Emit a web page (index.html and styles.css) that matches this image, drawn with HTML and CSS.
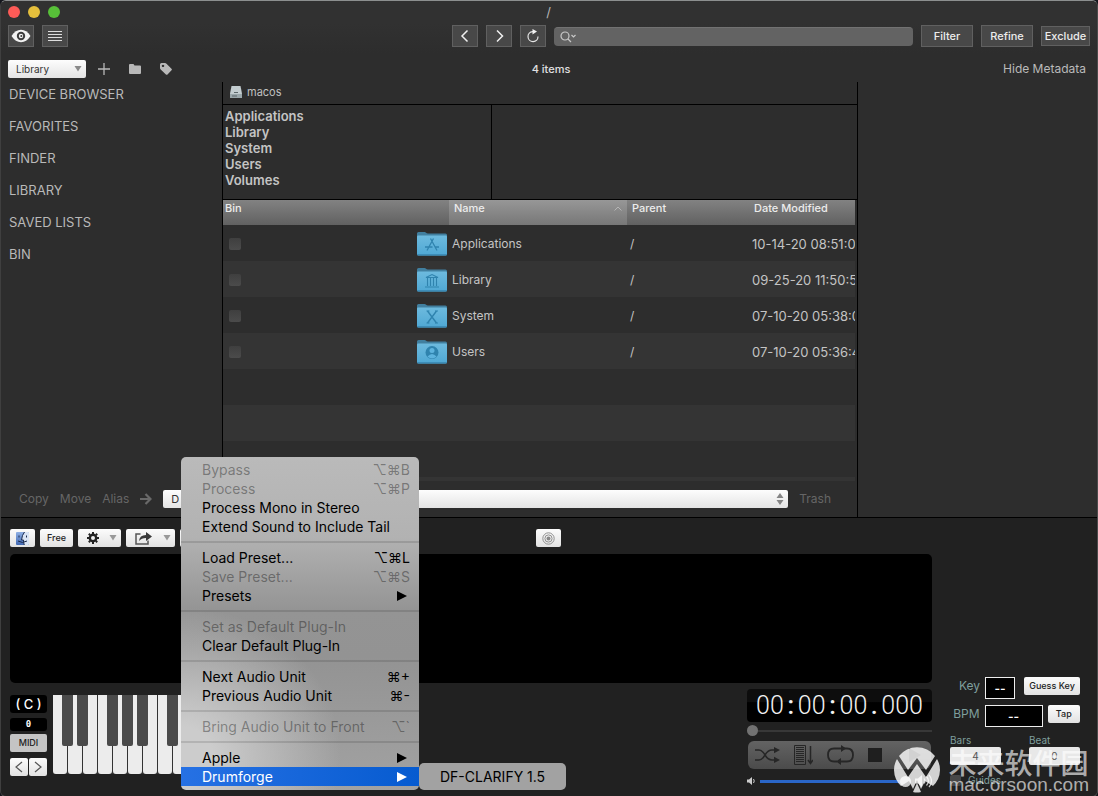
FILE: index.html
```
<!DOCTYPE html>
<html lang="en">
<head>
<meta charset="utf-8">
<title>/</title>
<link rel="stylesheet" href="styles.css">
</head>
<body>
<svg class="defs" aria-hidden="true">
  <defs>
    <linearGradient id="folderFill" x1="0" y1="0" x2="0" y2="1"><stop offset="0" stop-color="#6dbade"/><stop offset="1" stop-color="#4fa8d4"/></linearGradient>
    <linearGradient id="finderFill" x1="0" y1="0" x2="0" y2="1"><stop offset="0" stop-color="#8fb0e4"/><stop offset="1" stop-color="#4169b4"/></linearGradient>
    <pattern id="octave" width="105" height="80" patternUnits="userSpaceOnUse">
      <rect width="105" height="80" fill="#333"/>
      <path fill="#ececec" d="M0 0h14v76q0 3-3 3h-8q-3 0-3-3zM15 0h14v76q0 3-3 3h-8q-3 0-3-3zM30 0h14v76q0 3-3 3h-8q-3 0-3-3zM45 0h14v76q0 3-3 3h-8q-3 0-3-3zM60 0h14v76q0 3-3 3h-8q-3 0-3-3zM75 0h14v76q0 3-3 3h-8q-3 0-3-3zM90 0h14v76q0 3-3 3h-8q-3 0-3-3z"/>
      <path fill="#4a4a4a" d="M9 0h11v49q0 2-2 2h-7q-2 0-2-2zM24 0h11v49q0 2-2 2h-7q-2 0-2-2zM54 0h11v49q0 2-2 2h-7q-2 0-2-2zM69 0h11v49q0 2-2 2h-7q-2 0-2-2zM84 0h11v49q0 2-2 2h-7q-2 0-2-2z"/>
    </pattern>
    <symbol id="folder" viewBox="0 0 30 24">
      <path fill="#417f9f" d="M0 1.500q0-1.500 1.500-1.500h6q1 0 1.600.8t1.700.8h17.700q1.500 0 1.500 1.500V12H0z"/>
      <path fill="url(#folderFill)" d="M0 4.500q0-1 1-1h28q1 0 1 1V22q0 1.500-1.500 1.500h-27Q0 23.500 0 22z"/>
      <path fill="#3d8db8" d="M0 22h30q0 1.500-1.500 1.500h-27Q0 23.500 0 22z"/>
    </symbol>
  </defs>
</svg>

<div class="window">
  <header class="titlebar">
    <div class="lights">
      <button class="light red" aria-label="Close"></button>
      <button class="light yellow" aria-label="Minimize"></button>
      <button class="light green" aria-label="Zoom"></button>
    </div>
    <h1 class="title">/</h1>
  </header>

  <div class="toolbar">
    <div class="toolbar-left">
      <button class="tool" aria-label="Preview">
        <svg width="20" height="14" viewBox="0 0 20 14"><path fill="#f2f2f2" d="M0.500 7Q4.500.8 10 .8T19.500 7Q15.500 13.200 10 13.200T.5 7z"/><circle cx="10" cy="7" r="4.200" fill="#3c3c3c"/><circle cx="10" cy="7" r="2.200" fill="#f2f2f2"/><circle cx="10.300" cy="7" r="1" fill="#3c3c3c"/></svg>
      </button>
      <button class="tool" aria-label="List view">
        <svg width="16" height="12" viewBox="0 0 16 12"><path stroke="#ddd" d="M1 1.500h14M1 4.500h14M1 7.500h14M1 10.500h14"/></svg>
      </button>
    </div>
    <button class="tool" aria-label="Back"><svg width="12" height="14" viewBox="0 0 12 14"><path fill="none" stroke="#f0f0f0" stroke-width="1.500" d="M8.500 1.500L3 7l5.500 5.500"/></svg></button>
    <button class="tool" aria-label="Forward"><svg width="12" height="14" viewBox="0 0 12 14"><path fill="none" stroke="#f0f0f0" stroke-width="1.500" d="M4 1.500L9.500 7 4 12.500"/></svg></button>
    <button class="tool" aria-label="Reload"><svg width="14" height="14" viewBox="0 0 14 14"><path fill="none" stroke="#e6e6e6" stroke-width="1.200" d="M8 2.600H6.500A5 5 0 1 0 12 7.500"/><path fill="#f4f4f4" d="M6.500 0l4.500 2.600-4.500 2.800z"/></svg></button>
    <label class="search">
      <svg width="17" height="12" viewBox="0 0 17 12"><circle cx="5" cy="5" r="4" fill="none" stroke="#c8c8c8" stroke-width="1.200"/><path fill="none" stroke="#c8c8c8" stroke-width="1.200" d="M8 8l3 3M11.500 4l2 2 2-2"/></svg>
      <input type="search" aria-label="Search">
    </label>
    <button class="tool wide">Filter</button>
    <button class="tool wide">Refine</button>
    <button class="tool exclude">Exclude</button>
  </div>

  <div class="subbar">
    <div class="subbar-left">
      <label class="popup library">
        <select aria-label="Source"><option>Library</option></select>
        <svg width="8" height="6" viewBox="0 0 8 6"><path fill="#8a8a8a" d="M0.500 0h7L4 5.500z"/></svg>
      </label>
      <button class="bare" aria-label="Add"><svg width="12" height="12" viewBox="0 0 12 12"><path stroke="#b8b8b8" stroke-width="1.300" d="M6 0v12M0 6h12"/></svg></button>
      <button class="bare" aria-label="New folder"><svg width="12" height="10" viewBox="0 0 12 10"><path fill="#b8b8b8" d="M0 1q0-1 1-1h3.500l1 1.500H11q1 0 1 1V9q0 1-1 1H1q-1 0-1-1z"/></svg></button>
      <button class="bare" aria-label="Tag"><svg width="12" height="12" viewBox="0 0 12 12"><path fill="#b8b8b8" fill-rule="evenodd" d="M0 1.500Q0 0 1.500 0H5q.8 0 1.500.7l5 5q.8.8 0 1.600L7.500 11.500q-.8.700-1.600 0l-5.200-5Q0 5.800 0 5zM3 1.700a1.200 1.200 0 1 0 .01 0z"/></svg></button>
    </div>
    <p class="count">4 items</p>
    <button class="bare metadata">Hide Metadata</button>
  </div>

  <main class="browser">
    <nav class="sidebar">
      <a href="#device">DEVICE BROWSER</a>
      <a href="#favorites">FAVORITES</a>
      <a href="#finder">FINDER</a>
      <a href="#library">LIBRARY</a>
      <a href="#saved">SAVED LISTS</a>
      <a href="#bin">BIN</a>
    </nav>

    <section class="files">
      <div class="path">
        <svg width="12" height="12" viewBox="0 0 12 12"><path fill="#c3cdd0" d="M1.500 0h9L12 7.500V11q0 1-1 1H1q-1 0-1-1V7.500z"/><path fill="#9aa7ab" d="M0 8h12v3q0 1-1 1H1q-1 0-1-1z"/><path stroke="#5c676a" d="M2 10h5M4 6.500h4"/></svg>
        <span>macos</span>
      </div>
      <div class="columns">
        <ul>
          <li>Applications</li>
          <li>Library</li>
          <li>System</li>
          <li>Users</li>
          <li>Volumes</li>
        </ul>
      </div>
      <div class="list">
        <table>
          <colgroup><col class="c-bin"><col class="c-name"><col class="c-parent"><col></colgroup>
          <thead>
            <tr><th>Bin</th><th class="sorted"><div>Name<svg width="8" height="5" viewBox="0 0 8 5"><path fill="none" stroke="#b5b5b5" d="M0.500 4.500L4 1l3.500 3.500"/></svg></div></th><th>Parent</th><th class="date">Date Modified</th></tr>
          </thead>
          <tbody>
            <tr>
              <td><div class="bin"><input type="checkbox" aria-label="Applications in bin">
                <svg width="30" height="24" viewBox="0 0 30 24"><use href="#folder"/><path fill="none" stroke="#2f83ae" stroke-width="1.300" d="M16.500 6.500L10 18.500M13.500 6.500L20 18.500M8 15h7.500M18 15h4"/></svg></div></td>
              <td>Applications</td><td>/</td><td class="date">10-14-20 08:51:0</td>
            </tr>
            <tr>
              <td><div class="bin"><input type="checkbox" aria-label="Library in bin">
                <svg width="30" height="24" viewBox="0 0 30 24"><use href="#folder"/><path fill="none" stroke="#2f83ae" stroke-width="1.100" d="M9 9.500L15 6.500l6 3zM10.500 10v8M13.500 10v8M16.500 10v8M19.500 10v8M8 19h14"/></svg></div></td>
              <td>Library</td><td>/</td><td class="date">09-25-20 11:50:5</td>
            </tr>
            <tr>
              <td><div class="bin"><input type="checkbox" aria-label="System in bin">
                <svg width="30" height="24" viewBox="0 0 30 24"><use href="#folder"/><path fill="none" stroke="#2f83ae" stroke-width="1.400" d="M10.500 7l9 12M19.500 7l-9 12"/><path stroke="#2f83ae" d="M9.500 7h3M18 7h3M9.500 19h3M18 19h3"/></svg></div></td>
              <td>System</td><td>/</td><td class="date">07-10-20 05:38:0</td>
            </tr>
            <tr>
              <td><div class="bin"><input type="checkbox" aria-label="Users in bin">
                <svg width="30" height="24" viewBox="0 0 30 24"><use href="#folder"/><circle cx="15" cy="12.500" r="6.500" fill="#2f83ae"/><circle cx="15" cy="10.500" r="2.500" fill="#5db3de"/><path fill="#5db3de" d="M10.500 16.500q4.500-5 9 0-4.500 4-9 0z"/></svg></div></td>
              <td>Users</td><td>/</td><td class="date">07-10-20 05:36:4</td>
            </tr>
            <tr><td colspan="4"></td></tr>
            <tr><td colspan="4"></td></tr>
            <tr><td colspan="4"></td></tr>
            <tr><td colspan="4"></td></tr>
          </tbody>
        </table>
      </div>
    </section>

    <div class="actions">
      <button class="bare" disabled>Copy</button>
      <button class="bare" disabled>Move</button>
      <button class="bare" disabled>Alias</button>
      <svg class="arrow" width="12" height="12" viewBox="0 0 12 12"><path fill="none" stroke="#696969" stroke-width="2.200" d="M0 6h10M5.500 1l5 5-5 5"/></svg>
      <label class="popup destination">
        <select aria-label="Destination"><option>D</option></select>
        <svg width="8" height="12" viewBox="0 0 8 12"><path fill="#858585" d="M0.500 5L4 0l3.500 5zM.5 7h7L4 12z"/></svg>
      </label>
      <button class="bare" disabled>Trash</button>
    </div>
    <aside class="inspector"></aside>
  </main>

  <footer class="player">
    <div class="player-bar">
      <div class="player-tools">
        <button class="light-btn finder-btn" aria-label="Reveal in Finder"><svg width="13" height="13" viewBox="0 0 13 13"><rect width="13" height="13" rx="1" fill="url(#finderFill)"/><path fill="#d9e4f5" d="M8.500 0H12q1 0 1 1v11q0 1-1 1H8.200Q7.300 11 7.300 8H5.500Q6 3 8.500 0z"/><path fill="none" stroke="#1b2b4d" d="M8.500 0Q6 3 5.500 8h2q0 3 .8 5M3 3.500v2M10.500 3.500v2M2 9q4.500 3 9 0"/></svg></button>
        <button class="light-btn free">Free</button>
        <button class="light-btn gear" aria-label="Settings">
          <svg width="12" height="12" viewBox="0 0 12 12"><circle cx="6" cy="6" r="3.200" fill="none" stroke="#222" stroke-width="2.400"/><path stroke="#222" stroke-width="2" d="M6 0v2M6 10v2M0 6h2M10 6h2M1.800 1.800l1.400 1.400M8.800 8.800l1.400 1.400M1.800 10.200l1.400-1.400M8.800 3.200l1.400-1.400"/></svg>
          <svg width="8" height="6" viewBox="0 0 8 6"><path fill="#999" d="M0.500 0h7L4 5.500z"/></svg>
        </button>
        <button class="light-btn share" aria-label="Share">
          <svg width="17" height="13" viewBox="0 0 17 13"><path fill="none" stroke="#555" stroke-width="1.500" d="M5.500 2H1v10h12V8.500"/><path fill="#3a3a3a" d="M4 9Q4.500 3 11 3V0l6 4.500L11 9V6Q6.500 6 4 9z"/></svg>
          <svg width="8" height="6" viewBox="0 0 8 6"><path fill="#999" d="M0.500 0h7L4 5.500z"/></svg>
        </button>
        <button class="light-btn gear" aria-label="Audio unit"></button>
      </div>
      <button class="light-btn target" aria-label="Effects"><svg width="13" height="13" viewBox="0 0 13 13"><g fill="none" stroke="#909090"><circle cx="6.500" cy="6.500" r="5.700"/><circle cx="6.500" cy="6.500" r="3.600"/></g><circle cx="6.500" cy="6.500" r="2" fill="#888"/></svg></button>
    </div>

    <div class="deck">
      <div class="deck-main">
        <div class="wave"></div>
        <div class="lower">
          <div class="keys">
            <div class="pitch">
              <output class="note">( C )</output>
              <output class="octave">0</output>
              <button class="light-btn midi">MIDI</button>
              <div class="steps">
                <button class="light-btn" aria-label="Octave down"><svg width="8" height="12" viewBox="0 0 8 12"><path fill="none" stroke="#555" stroke-width="1.200" d="M7 1L1 6l6 5"/></svg></button>
                <button class="light-btn" aria-label="Octave up"><svg width="8" height="12" viewBox="0 0 8 12"><path fill="none" stroke="#555" stroke-width="1.200" d="M1 1l6 5-6 5"/></svg></button>
              </div>
            </div>
            <svg class="piano" width="314" height="79"><rect width="314" height="79" fill="url(#octave)"/></svg>
          </div>
          <div class="transport">
            <div class="clock">00<span>:</span>00<span>:</span>00<span>.</span>000</div>
            <input class="seek" type="range" min="0" max="100" value="0" aria-label="Position">
            <div class="controls">
              <button aria-label="Shuffle"><svg width="25" height="16" viewBox="0 0 25 16"><path fill="none" stroke="#262626" stroke-width="1.500" d="M0 3h4q3 0 6 5t7 5h3M0 13h4q3 0 6-5t7-5h3"/><path fill="#262626" d="M19 0l6 3-6 3.200zM19 9.800l6 3.200-6 3z"/></svg></button>
              <button aria-label="Play list"><svg width="19" height="20" viewBox="0 0 19 20"><path fill="none" stroke="#262626" d="M0.500.5h11v19H.5zM2 4.500h8M2 6.500h8M2 8.500h8M2 10.500h8M2 12.500h8M2 14.500h8M2 16.500h8M2 2.500h8"/><path fill="none" stroke="#262626" stroke-width="1.500" d="M16.500 1v17M14 15l2.500 3.500L19 15"/></svg></button>
              <button aria-label="Loop"><svg width="27" height="20" viewBox="0 0 27 20"><path fill="none" stroke="#262626" stroke-width="1.800" d="M10 16.500H7Q1 16.500 1 10t6-6.500h9M17 3.500h3q6 0 6 6.500t-6 6.500h-7"/><path fill="#262626" d="M14 0l5 3.500L14 7zM14 13l-5 3.500 5 3.500z"/></svg></button>
              <button aria-label="Stop"><svg width="14" height="14" viewBox="0 0 14 14"><path fill="#1f1f1f" d="M0 0h14v14H0z"/></svg></button>
              <button class="play" aria-label="Play"><svg width="14" height="14" viewBox="0 0 14 14"><path fill="#1f1f1f" d="M1 0l12 7-12 7z"/></svg></button>
            </div>
            <div class="volume">
              <svg width="9" height="8" viewBox="0 0 9 8"><path fill="#ccc" d="M0 2.500h2L5 0v8L2 5.500H0z"/><path fill="none" stroke="#ccc" d="M6.500 2q1.500 2 0 4"/></svg>
              <input type="range" min="0" max="100" value="100" aria-label="Volume">
              <svg width="17" height="14" viewBox="0 0 17 14"><path fill="#ccc" d="M0 4.500h3L7 1v12L3 9.500H0z"/><path fill="none" stroke="#ccc" stroke-width="1.200" d="M9 4.500q2 2.500 0 5M11.500 2.500q4 4.500 0 9M14 .8q5 6 0 12.400"/></svg>
            </div>
          </div>
        </div>
      </div>

      <div class="tempo">
        <div class="tempo-row"><label for="key">Key</label><input id="key" class="key" type="text" value="--"><button class="light-btn guess">Guess Key</button></div>
        <div class="tempo-row"><label for="bpm">BPM</label><input id="bpm" class="bpm" type="text" value="--"><button class="light-btn tap">Tap</button></div>
        <div class="beats">
          <label>Bars<input type="text" value="4"></label>
          <label>Beat<input type="text" value="0"></label>
        </div>
        <label class="guides"><input type="checkbox">Guides</label>
      </div>
    </div>
  </footer>

  <div class="menu" role="menu">
    <button disabled>Bypass<kbd>⌥⌘B</kbd></button>
    <button disabled>Process<kbd>⌥⌘P</kbd></button>
    <button>Process Mono in Stereo</button>
    <button>Extend Sound to Include Tail</button>
    <hr>
    <button>Load Preset...<kbd>⌥⌘L</kbd></button>
    <button disabled>Save Preset...<kbd>⌥⌘S</kbd></button>
    <button>Presets<svg width="10" height="10" viewBox="0 0 10 10"><path d="M0 0l10 5-10 5z"/></svg></button>
    <hr>
    <button disabled>Set as Default Plug-In</button>
    <button>Clear Default Plug-In</button>
    <hr>
    <button>Next Audio Unit<kbd>⌘+</kbd></button>
    <button>Previous Audio Unit<kbd>⌘-</kbd></button>
    <hr>
    <button disabled>Bring Audio Unit to Front<kbd>⌥`</kbd></button>
    <hr>
    <button>Apple<svg width="10" height="10" viewBox="0 0 10 10"><path d="M0 0l10 5-10 5z"/></svg></button>
    <button class="active">Drumforge<svg width="10" height="10" viewBox="0 0 10 10"><path d="M0 0l10 5-10 5z"/></svg></button>
    <div class="submenu" role="menu"><button>DF-CLARIFY 1.5</button></div>
  </div>

  <div class="watermark">
    <svg width="46" height="46" viewBox="0 0 46 46"><g fill="#fff" fill-opacity=".8"><path d="M5 9A23 23 0 0 1 41 9L32 23 23 11 14 23z"/><path d="M3 12L14 30l9-13 9 13L43 12q3 5 3 11a23 23 0 0 1-7 16L31 34l-4 8-4-9-4 9-4-8-8 5A23 23 0 0 1 0 23q0-6 3-11z"/><path d="M23 36l4 9q-4 1-8 0z"/></g></svg>
    <div class="watermark-text">
      <span class="brand" lang="zh">未来软件园</span>
      <span class="host">mac.orsoon.com</span>
    </div>
  </div>
</div>
</body>
</html>
```
FILE: styles.css
```
* { box-sizing: border-box; }
body {
  margin: 0;
  background: #14161c;
  color: #c4c4c4;
  font: 12px/16px Inter, "Liberation Sans", sans-serif;
}
button, input, select, output {
  margin: 0;
  padding: 0;
  border: 0;
  font: inherit;
  color: inherit;
  background: none;
}
svg { display: block; flex: none; }
h1, p, ul { margin: 0; padding: 0; list-style: none; }
.defs { position: absolute; width: 0; height: 0; }

.window {
  position: relative;
  display: flex;
  flex-direction: column;
  min-height: 100vh;
  border: 1px solid #4b4b4b;
  border-top-color: #8c8f8f;
  border-left-color: #3f3f3f;
  border-radius: 6px;
  overflow: hidden;
  background: #2d2d2d;
}

/* title bar and toolbar */
.titlebar {
  display: grid;
  grid-template-columns: 1fr auto 1fr;
  align-items: center;
  height: 23px;
  padding: 0 8px 2px 7px;
  background: #313131;
}
.lights { display: flex; gap: 8px; }
.light { width: 12px; height: 12px; border-radius: 50%; }
.red { background: #fc5b57; }
.yellow { background: #e5bf3c; }
.green { background: #57c038; }
.title { font-size: 13px; font-weight: 400; color: #b5b5b5; }
.toolbar {
  display: flex;
  align-items: center;
  gap: 8px;
  padding: 1px 7px 7px;
  background: linear-gradient(#313131, #2d2d2d);
}
.toolbar-left { display: flex; gap: 8px; flex: 0 0 436px; }
.tool {
  display: flex;
  flex: none;
  align-items: center;
  justify-content: center;
  width: 26px;
  height: 22px;
  border: 1px solid #606060;
  background: #484848;
  color: #ececec;
  font-size: 11px;
  font-weight: 500;
}
.wide { width: 52px; }
.exclude { width: 49px; height: 20px; }
.search {
  display: flex;
  flex: 1;
  align-items: center;
  gap: 4px;
  height: 19px;
  padding: 0 6px;
  border-radius: 4px;
  background: #636363;
  border-top: 1px solid #727272;
}
.search input { flex: 1; min-width: 0; outline: 0; }

.subbar {
  display: grid;
  grid-template-columns: 1fr auto 1fr;
  align-items: center;
  height: 28px;
  padding: 1px 11px 0 7px;
}
.subbar-left { display: flex; align-items: center; gap: 12px; }
.subbar-left .bare { width: 19px; display: grid; place-items: center; }
.subbar-left .popup { margin-right: -4px; }
.count { padding-left: 8px; color: #e0e0e0; font-size: 11px; font-weight: 500; }
.metadata { justify-self: end; color: #bababa; }
.popup { display: grid; align-items: center; }
.popup select, .popup svg { grid-area: 1 / 1; }
.popup svg { justify-self: end; margin-right: 4px; pointer-events: none; }
.popup select {
  appearance: none;
  width: 100%;
  height: 18px;
  padding: 0 8px;
  border-radius: 2px;
  background: linear-gradient(#fdfdfd, #e4e4e4);
  color: #333;
  font-size: 10px;
}
.library { width: 78px; }

/* browser */
.browser {
  display: grid;
  flex: 1;
  grid-template-columns: 221px minmax(0, 1fr) 240px;
  grid-template-rows: 1fr 36px;
}
.sidebar {
  display: flex;
  flex-direction: column;
  padding-left: 8px;
}
.sidebar a {
  height: 32px;
  line-height: 24px;
  color: #b9b9b9;
  font-size: 13px;
  text-decoration: none;
}
.inspector { grid-column: 3; grid-row: 1 / 3; border-left: 1px solid #000; }
.files {
  display: flex;
  flex-direction: column;
  border-left: 1px solid #000;
  min-width: 0;
}
.path {
  display: flex;
  align-items: center;
  gap: 5px;
  height: 23px;
  padding: 0 7px 2px;
  border-bottom: 1px solid #000;
  color: #c0c0c0;
  font-size: 11px;
}
.columns {
  display: grid;
  grid-template-columns: 269px 1fr;
  height: 95px;
  border-bottom: 1px solid #000;
}
.columns ul {
  padding: 3px 2px;
  border-right: 1px solid #000;
  font-size: 13px;
  font-weight: 600;
}
.list { flex: 1 1 281px; height: 281px; overflow: hidden; padding-right: 2px; }
table { width: 100%; table-layout: fixed; border-collapse: collapse; }
.c-bin { width: 226px; }
.c-name { width: 178px; }
.c-parent { width: 122px; }
th {
  height: 25px;
  padding: 0 2px;
  background: linear-gradient(#828282, #616161);
  color: #ececec;
  font-size: 11px;
  font-weight: 500;
  text-align: left;
  vertical-align: top;
}
th.sorted { background: linear-gradient(#979797, #777); padding: 0 5px; }
th.sorted div { display: flex; justify-content: space-between; align-items: center; }
th + th + th { padding-left: 5px; }
td { height: 36px; padding: 2px 3px 0; font-size: 12px; white-space: nowrap; overflow: hidden; }
tbody tr:nth-child(even) { background: #343434; }
td.date { padding-right: 0; font-size: 13px; text-overflow: clip; }
.bin { display: flex; justify-content: space-between; align-items: center; padding-left: 3px; margin-right: -1px; }
.bin input {
  appearance: none;
  width: 12px;
  height: 12px;
  border-radius: 2px;
  background: linear-gradient(#3f3f3f, #4b4b4b);
}
.actions {
  display: flex;
  grid-column: 1 / 3;
  align-items: center;
  gap: 11px;
  padding: 0 26px 0 18px;
  color: #666;
}
.destination { flex: 1; }
.destination select { font-size: 11px; }

/* player */
.player { background: #212121; border-top: 1px solid #000; }
.light-btn {
  display: flex;
  align-items: center;
  justify-content: center;
  height: 18px;
  border-radius: 2px;
  background: linear-gradient(#fcfcfc, #e2e2e2);
  color: #222;
  font-size: 9px;
  font-weight: 500;
}
.player-bar { display: grid; grid-template-columns: 1fr auto 1fr; padding: 11px 11px 7px 9px; }
.player-tools { display: flex; gap: 5px; }
.finder-btn, .target { width: 25px; }
.free { width: 33px; }
.gear { width: 43px; gap: 10px; padding-left: 5px; }
.share { width: 49px; gap: 11px; padding-left: 4px; }
.deck { display: grid; grid-template-columns: minmax(0, 1fr) 165px; padding-left: 9px; }
.wave { height: 129px; border-radius: 5px; background: #000; }
.lower { display: flex; justify-content: space-between; padding: 6px 0 3px; }
.keys { display: flex; gap: 6px; padding-top: 6px; }
.pitch { display: flex; flex-direction: column; width: 37px; }
.note, .octave {
  border-radius: 3px;
  background: #000;
  color: #fff;
  text-align: center;
}
.note { height: 18px; font-size: 13px; line-height: 18px; font-weight: 500; }
.octave { height: 13px; margin: 5px 0 3px; font: 700 9px/13px "DejaVu Sans Mono", monospace; }
.midi { background: #c4c4c4; }
.steps { display: flex; gap: 1px; margin-top: 6px; }
.steps button { flex: 1; }

.transport { width: 185px; }
.clock {
  height: 33px;
  border-radius: 4px;
  background: linear-gradient(#0d0d0d 40%, #000 41%);
  color: #f2f2f2;
  font: 300 25px/34px Roboto, sans-serif;
  text-align: center;
  white-space: nowrap;
}
.clock span { display: inline-block; width: 14px; font-weight: 500; }
input[type="range"] { appearance: none; display: block; height: 12px; min-width: 0; }
input[type="range"]::-webkit-slider-runnable-track { height: 2px; background: #383838; }
input[type="range"]::-webkit-slider-thumb {
  appearance: none;
  width: 11px;
  height: 11px;
  margin-top: -5px;
  border-radius: 50%;
  background: #727272;
}
.seek { width: 100%; margin: 3px 0 4px; }
.controls {
  display: flex;
  align-items: center;
  gap: 14px;
  height: 28px;
  margin: 0 1px;
  padding: 0 9px 0 7px;
  border-radius: 6px;
  background: linear-gradient(#636363, #4b4b4b);
}
.play { margin-left: auto; }
.volume { display: flex; align-items: center; gap: 4px; height: 24px; }
.volume input { flex: 1; }
.volume input[type="range"]::-webkit-slider-runnable-track { height: 3px; background: #2a66c8; }
.volume input[type="range"]::-webkit-slider-thumb { background: #c8c8c8; margin-top: -4px; }

.tempo { align-self: start; padding: 123px 17px 0 18px; color: #7f9f9d; }
.tempo-row { display: flex; gap: 5px; height: 28px; }
.tempo-row label { width: 30px; text-align: right; line-height: 18px; }
.tempo-row input {
  height: 22px;
  border: 1px solid #eee;
  background: #000;
  color: #fff;
  text-align: center;
  font-weight: 600;
}
.tempo-row .key { width: 30px; }
.tempo-row .bpm { width: 58px; }
.tempo-row button { margin-left: auto; }
.guess { width: 56px; }
.tap { width: 33px; }
.beats { display: flex; justify-content: space-between; }
.beats label { width: 51px; font-size: 10px; line-height: 14px; }
.beats input {
  display: block;
  width: 100%;
  height: 18px;
  border-radius: 2px;
  background: #e8e8e8;
  color: #555;
  text-align: center;
}
.guides { display: flex; align-items: center; gap: 7px; margin-top: 7px; font-size: 10px; }
.guides input { appearance: none; width: 11px; height: 11px; border-radius: 2px; background: #484848; }

/* pop-up menu */
.menu {
  position: absolute;
  top: 456px;
  left: 180px;
  width: 238px;
  padding: 3px 0 4px;
  border-radius: 5px;
  color: #000;
  background:
    radial-gradient(ellipse 160px 150px at 0% 90%, #ccc 20%, rgba(204, 204, 204, 0)),
    linear-gradient(#bababa, #b2b2b2 24%, #949494 46%, #939393 60%, #a2a2a2);
}
.menu button {
  display: flex;
  width: 100%;
  height: 19px;
  align-items: center;
  justify-content: space-between;
  padding: 0 9px 0 21px;
  font-size: 14px;
  white-space: nowrap;
}
.menu button:disabled { color: rgba(0, 0, 0, .36); }
.menu button svg { margin-right: 3px; fill: currentColor; }
.menu .active { background: linear-gradient(90deg, #2671e4, #065bd0); color: #fff; }
.menu hr { height: 2px; margin: 5px 0; border: 0; background: rgba(0, 0, 0, .12); }
kbd { font: inherit; }
.submenu {
  position: absolute;
  right: -147px;
  bottom: 0;
  width: 147px;
  padding: 4px 0;
  border-radius: 5px;
  background: #a2a2a2;
}

.watermark {
  position: absolute;
  right: 8px;
  bottom: 3px;
  display: flex;
  align-items: center;
  gap: 9px;
  color: rgba(255, 255, 255, .65);
  pointer-events: none;
}
.watermark-text { display: flex; flex-direction: column; }
.brand { font: 500 28px/28px "Noto Sans CJK SC", sans-serif; }
.host { font: 19px/17px "Liberation Sans", sans-serif; }
```
